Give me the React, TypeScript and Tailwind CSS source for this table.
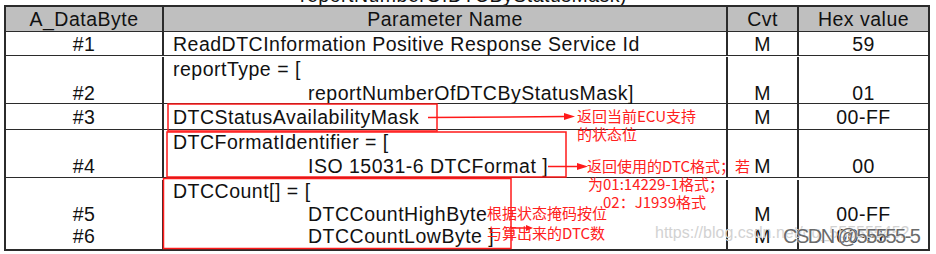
type Line = { t: string; indent?: boolean };

function Cell({ lines, className }: { lines: Line[]; className: string }) {
  return (
    <div className={className}>
      {lines.map((l, i) => (
        <div key={i} className={l.indent ? "whitespace-pre pl-[135px]" : "whitespace-pre"}>
          {l.t || "\u00a0"}
        </div>
      ))}
    </div>
  );
}

const col1 = "w-[158px] shrink-0 border-r-2 border-[#2b2b2b] text-center";
const col2 = "w-[564px] shrink-0 border-r-2 border-[#2b2b2b] pl-[9px]";
const col3 = "w-[71px] shrink-0 border-r-2 border-[#2b2b2b] text-center";
const col4 = "flex-1 text-center";

const L = (...xs: (string | Line)[]): Line[] => xs.map((x) => (typeof x === "string" ? { t: x } : x));

export default function App() {
  return (
    <div className="relative h-[254px] w-[936px] overflow-hidden bg-white font-['Liberation_Sans',Arial,sans-serif] text-[#111]">
      {/* caption above the table, cut off by the crop */}
      <div className="h-[5px] overflow-hidden pl-[300px] text-[19.5px] tracking-[0.5px]">
        <div className="mt-[-17px] leading-[24px]">reportNumberOfDTCByStatusMask)</div>
      </div>

      <div className="ml-[4px] w-[926px] border-2 border-[#2b2b2b] text-[19.5px] tracking-[0.5px]">
        {/* header */}
        <div className="flex h-[25px] items-center border-b border-[#2b2b2b] bg-[#bfbfbf] leading-[24px]">
          <Cell className={`${col1} h-full flex flex-col justify-center`} lines={L("A_DataByte")} />
          <Cell className={`${col2} h-full flex flex-col justify-center !pl-0 text-center`} lines={L("Parameter Name")} />
          <Cell className={`${col3} h-full flex flex-col justify-center`} lines={L("Cvt")} />
          <Cell className={`${col4} h-full flex flex-col justify-center`} lines={L("Hex value")} />
        </div>

        {/* #1 */}
        <div className="flex h-[24px] border-b border-[#2b2b2b] leading-[24px]">
          <Cell className={`${col1} flex flex-col justify-center`} lines={L("#1")} />
          <Cell className={`${col2} flex flex-col justify-center`} lines={L("ReadDTCInformation Positive Response Service Id")} />
          <Cell className={`${col3} flex flex-col justify-center`} lines={L("M")} />
          <Cell className={`${col4} flex flex-col justify-center`} lines={L("59")} />
        </div>

        {/* #2 */}
        <div className="flex h-[48px] border-b border-[#2b2b2b] pt-[1px] leading-[24px]">
          <Cell className={col1} lines={L("", "#2")} />
          <Cell className={col2} lines={L("reportType = [", { t: "reportNumberOfDTCByStatusMask]", indent: true })} />
          <Cell className={col3} lines={L("", "M")} />
          <Cell className={col4} lines={L("", "01")} />
        </div>

        {/* #3 */}
        <div className="flex h-[26px] border-b border-[#2b2b2b] leading-[24px]">
          <Cell className={`${col1} flex flex-col justify-center`} lines={L("#3")} />
          <Cell className={`${col2} flex flex-col justify-center`} lines={L("DTCStatusAvailabilityMask")} />
          <Cell className={`${col3} flex flex-col justify-center`} lines={L("M")} />
          <Cell className={`${col4} flex flex-col justify-center`} lines={L("00-FF")} />
        </div>

        {/* #4 */}
        <div className="flex h-[48px] border-b border-[#2b2b2b] leading-[24px]">
          <Cell className={col1} lines={L("", "#4")} />
          <Cell className={col2} lines={L("DTCFormatIdentifier = [", { t: "ISO 15031-6 DTCFormat ]", indent: true })} />
          <Cell className={col3} lines={L("", "M")} />
          <Cell className={col4} lines={L("", "00")} />
        </div>

        {/* #5 #6 */}
        <div className="flex h-[71px] pt-[2px] leading-[22.5px]">
          <Cell className={col1} lines={L("", "#5", "#6")} />
          <Cell
            className={col2}
            lines={L(
              "DTCCount[] = [",
              { t: "DTCCountHighByte", indent: true },
              { t: "DTCCountLowByte ]", indent: true }
            )}
          />
          <Cell className={col3} lines={L("", "M", "M")} />
          <Cell className={col4} lines={L("", "00-FF", "00-FF")} />
        </div>
      </div>

      {/* watermark */}
      <div className="absolute left-[655px] top-[224px] text-[16px] leading-[18px] text-[#d2d2d2]">
        https://blog.csdn.net/qq_555555452
      </div>
      <div className="absolute left-[783px] top-[223px] text-[20px] leading-[26px] tracking-[-1.5px] text-[#6a6a6a] [text-shadow:0_0_1px_#fff,0_0_2px_#fff]">
        CSDN @55555-5
      </div>

      {/* red annotations */}
      <svg className="pointer-events-none absolute left-0 top-0" width="936" height="254" viewBox="0 0 936 254">
        <g fill="none" stroke="#ff1a1a" strokeWidth="1.5">
          <rect x="168" y="104" width="269" height="27" />
          <rect x="167" y="132" width="399" height="45" />
          <rect x="163.5" y="178.5" width="347.5" height="70" />
          <path d="M428 117.5 L566 116.5" />
          <path d="M548 166.5 L580 166.5" />
          <path d="M511 228 L527 228" />
        </g>
        <g fill="#ff1a1a">
          <polygon points="564,113 575,116.5 564,120" />
          <polygon points="577,163 588,166.5 577,170" />
          <polygon points="526,225 533,228 526,231" />
        </g>
      </svg>

      <div className="absolute left-[577px] top-[107px] font-['Noto_Sans_CJK_SC',sans-serif] text-[15px] leading-[18px] text-[#ff2020]">
        <div>返回当前ECU支持</div>
        <div>的状态位</div>
      </div>
      <div className="absolute left-[587px] top-[157px] font-['Noto_Sans_CJK_SC',sans-serif] text-[15px] leading-[18px] text-[#ff2020]">
        <div>返回使用的DTC格式；若</div>
        <div className="pl-[1px]">为01:14229-1格式；</div>
        <div className="pl-[16px]">02：J1939格式</div>
      </div>
      <div className="absolute left-[487px] top-[203px] font-['Noto_Sans_CJK_SC',sans-serif] text-[15px] leading-[20px] text-[#ff2020]">
        <div>根据状态掩码按位</div>
        <div>与算出来的DTC数</div>
      </div>
    </div>
  );
}
